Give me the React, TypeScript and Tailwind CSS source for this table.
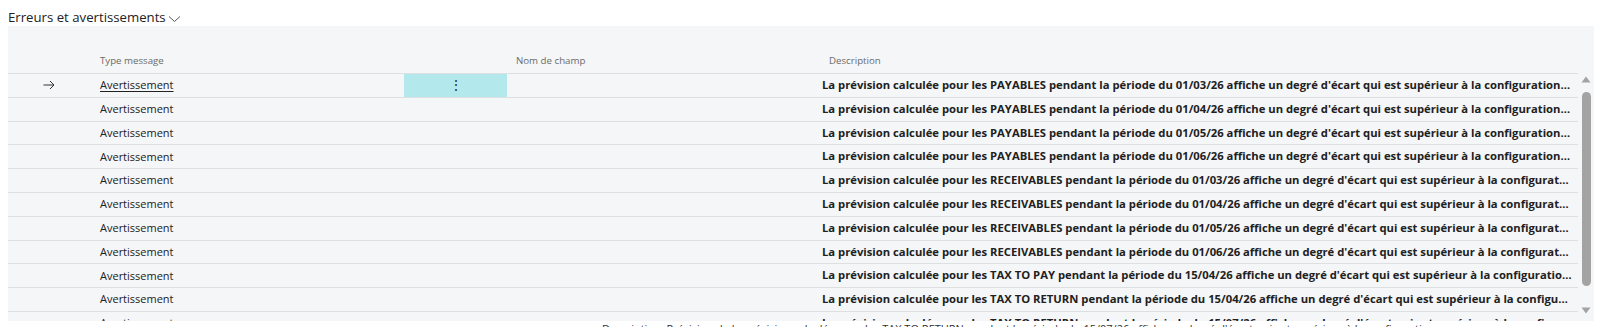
import React from 'react';

type Row = { kind: string; date: string };

const rows: Row[] = [
  { kind: 'PAYABLES', date: '01/03/26' },
  { kind: 'PAYABLES', date: '01/04/26' },
  { kind: 'PAYABLES', date: '01/05/26' },
  { kind: 'PAYABLES', date: '01/06/26' },
  { kind: 'RECEIVABLES', date: '01/03/26' },
  { kind: 'RECEIVABLES', date: '01/04/26' },
  { kind: 'RECEIVABLES', date: '01/05/26' },
  { kind: 'RECEIVABLES', date: '01/06/26' },
  { kind: 'TAX TO PAY', date: '15/04/26' },
  { kind: 'TAX TO RETURN', date: '15/04/26' },
  { kind: 'TAX TO RETURN', date: '15/07/26' },
];

const describe = (r: Row) =>
  `La prévision calculée pour les ${r.kind} pendant la période du ${r.date} affiche un degré d'écart qui est supérieur à la configuration de tolérance définie pour ce type.`;

function Triangle({ up }: { up?: boolean }) {
  return (
    <svg width="10" height="7" viewBox="0 0 10 7" className="block">
      {up ? <path d="M5 0.5 L9.5 6.5 L0.5 6.5 Z" fill="#a3a3a3" /> : <path d="M0.5 0.5 L9.5 0.5 L5 6.5 Z" fill="#a3a3a3" />}
    </svg>
  );
}

export default function App() {
  return (
    <div className="bg-white w-[1600px] h-[327px] overflow-hidden text-[#212121]" style={{ fontFamily: '"Open Sans", "Noto Sans", sans-serif' }}>
      {/* section title */}
      <div className="flex items-center h-[26px] pl-[8px] pt-[9px]">
        <span className="text-[13.2px] leading-none">Erreurs et avertissements</span>
        <svg width="13" height="8" viewBox="0 0 13 8" className="ml-[2px] mt-[2px]">
          <path d="M1 1.5 L6.5 6.5 L12 1.5" fill="none" stroke="#555" strokeWidth="1" />
        </svg>
      </div>

      {/* list panel */}
      <div className="ml-[8px] w-[1586px] h-[295px] bg-[#f5f6f8] flex overflow-hidden">
        <div className="flex-1">
          <div className="h-[24px]" />
          <div className="grid grid-cols-[92px_304px_103px_315px_1fr] h-[24px] items-center border-b border-[#dedfe1] text-[9.7px] text-[#6b6b6b]">
            <div />
            <div>Type message</div>
            <div />
            <div className="pl-[9px]">Nom de champ</div>
            <div className="pl-[7px]">Description</div>
          </div>
          {rows.map((r, i) => (
            <div key={i} className="grid grid-cols-[92px_304px_103px_315px_1fr] h-[23.8px] items-center border-b border-[#dedfe1] text-[11px]">
              <div className="flex pl-[35px]">
                {i === 0 && (
                  <svg width="12" height="10" viewBox="0 0 12 10">
                    <path d="M0.5 5 H11 M7 1 L11 5 L7 9" fill="none" stroke="#333" strokeWidth="1" />
                  </svg>
                )}
              </div>
              <div className={i === 0 ? 'underline underline-offset-2' : ''}>Avertissement</div>
              <div className={i === 0 ? 'h-full bg-[#b3e8ec] flex items-center justify-center' : ''}>
                {i === 0 && <span className="text-[14px] leading-none text-[#333]">⋮</span>}
              </div>
              <div />
              <div className="truncate font-bold text-[11.25px] pr-[6px]">{describe(r)}</div>
            </div>
          ))}
        </div>
        <div className="w-[16px] flex flex-col items-center pt-[50px]">
          <Triangle up />
          <div className="mt-[9px] w-[9px] h-[194px] rounded-full bg-[#a3a3a3]" />
          <div className="mt-[21px]">
            <Triangle />
          </div>
        </div>
      </div>

      {/* hover text below list */}
      <div className="pl-[602px] pt-[2px] text-[11px] leading-[12px] whitespace-nowrap text-[#333]">
        Description: Précision de la prévision calculée pour les TAX TO RETURN pendant la période du 15/07/26 affiche un degré d'écart qui est supérieur à la configuration
      </div>
    </div>
  );
}
